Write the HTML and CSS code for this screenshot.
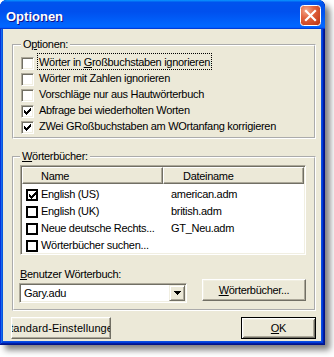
FILE: index.html
```html
<!DOCTYPE html>
<html lang="de">
<head>
<meta charset="utf-8">
<title>Optionen</title>
<link rel="stylesheet" href="styles.css">
</head>
<body>
<div class="window">
  <div class="titlebar">
    <span class="title">Optionen</span>
    <span class="close" aria-label="Schließen">
      <svg width="21" height="21" viewBox="0 0 21 21">
        <defs>
          <radialGradient id="cg" cx="30%" cy="25%" r="95%">
            <stop offset="0" stop-color="#F4A88C"/>
            <stop offset="0.4" stop-color="#E2643F"/>
            <stop offset="1" stop-color="#BF3512"/>
          </radialGradient>
        </defs>
        <rect x="0.5" y="0.5" width="20" height="20" rx="3" fill="url(#cg)" stroke="#fff"/>
        <path d="M6 6 L15 15 M15 6 L6 15" stroke="#fff" stroke-width="2.2" stroke-linecap="square"/>
      </svg>
    </span>
  </div>
  <div class="body">
    <fieldset class="group g1">
      <legend>O<u>p</u>tionen:</legend>
      <div class="opt"><span class="cb"></span><span class="lbl focus">Wörter in <u>G</u>roßbuchstaben ignorieren</span></div>
      <div class="opt"><span class="cb"></span><span class="lbl">Wörter mit Zahlen ignorieren</span></div>
      <div class="opt"><span class="cb"></span><span class="lbl">Vorschläge nur aus Hautwörterbuch</span></div>
      <div class="opt"><span class="cb"><svg class="chk" width="11" height="11" viewBox="-2 -2 11 11"><path d="M6 0h1v1h-1zM5 1h2v1h-2zM0 2h1v1h-1zM4 2h3v1h-3zM0 3h2v1h-2zM3 3h3v1h-3zM0 4h5v1h-5zM1 5h3v1h-3zM2 6h1v1h-1z"/></svg></span><span class="lbl">Abfrage bei wiederholten Worten</span></div>
      <div class="opt"><span class="cb"><svg class="chk" width="11" height="11" viewBox="-2 -2 11 11"><path d="M6 0h1v1h-1zM5 1h2v1h-2zM0 2h1v1h-1zM4 2h3v1h-3zM0 3h2v1h-2zM3 3h3v1h-3zM0 4h5v1h-5zM1 5h3v1h-3zM2 6h1v1h-1z"/></svg></span><span class="lbl">ZWei GRoßbuchstaben am WOrtanfang korrigieren</span></div>
    </fieldset>

    <fieldset class="group g2">
      <legend><u>W</u>örterbücher:</legend>
      <div class="list">
        <div class="lhead">
          <div class="hcol h1">Name</div>
          <div class="hcol h2">Dateiname</div>
        </div>
        <div class="lrows">
          <div class="lrow"><div class="c1"><span class="lcb"><svg class="chk" width="8" height="8" viewBox="-0.5 -0.5 8 8"><path d="M6 0h1v1h-1zM5 1h2v1h-2zM0 2h1v1h-1zM4 2h3v1h-3zM0 3h2v1h-2zM3 3h3v1h-3zM0 4h5v1h-5zM1 5h3v1h-3zM2 6h1v1h-1z"/></svg></span>English (US)</div><div class="c2">american.adm</div></div>
          <div class="lrow"><div class="c1"><span class="lcb"></span>English (UK)</div><div class="c2">british.adm</div></div>
          <div class="lrow"><div class="c1"><span class="lcb"></span>Neue deutsche Rechts...</div><div class="c2">GT_Neu.adm</div></div>
          <div class="lrow"><div class="c1"><span class="lcb"></span>Wörterbücher suchen...</div><div class="c2"></div></div>
        </div>
      </div>
      <div class="userrow">
        <div class="usercol">
          <div class="ulabel"><u>B</u>enutzer Wörterbuch:</div>
          <div class="combo">
            <span class="ctext">Gary.adu</span>
            <span class="cbtn"><svg width="7" height="4" viewBox="0 0 7 4"><path d="M0 0h7v1h-1v1h-1v1h-1v1h-1v-1h-1v-1h-1v-1h-1z"/></svg></span>
          </div>
        </div>
        <button class="btn wb"><span><u>W</u>örterbücher...</span></button>
      </div>
    </fieldset>

    <div class="footer">
      <button class="btn std"><span class="nowrap">Standard-Einstellungen</span></button>
      <button class="btn ok"><span><u>O</u>K</span></button>
    </div>
  </div>
</div>
</body>
</html>
```

FILE: styles.css
```css
* { box-sizing: border-box; }

html, body {
  margin: 0;
  padding: 0;
  background: #fff;
}

body {
  width: 334px;
  height: 357px;
  overflow: hidden;
  font-family: "Liberation Sans", Arial, sans-serif;
  font-size: 11px;
  letter-spacing: -0.3px;
  color: #000;
}

u { text-decoration: underline; text-underline-offset: 1px; }

.window {
  width: 325px;
  height: 345px;
  display: flex;
  flex-direction: column;
  border-radius: 7px 7px 0 0;
  background: #0A4FE0;
  box-shadow:
    inset -1px -1px #00138c,
    inset 1px 1px #0831d9,
    inset -2px -2px #001ea0,
    inset 2px 2px #166aee,
    inset -3px -3px #003bda,
    inset 3px 3px #0855dd,
    5px 5px 6px rgba(0, 0, 0, 0.5);
}

.titlebar {
  height: 29px;
  flex: none;
  display: flex;
  align-items: flex-start;
  padding: 0 4px 0 6px;
  border-radius: 7px 7px 0 0;
  background: linear-gradient(180deg, #0997ff, #0053ee 8%, #0050ee 40%, #0066ff 88%, #0066ff 93%, #005bff 95%, #003dd7 96%, #003dd7);
}

.title {
  margin-top: 9px;
  font-size: 13px;
  line-height: 16px;
  font-weight: bold;
  letter-spacing: 0;
  color: #fff;
  text-shadow: 1px 1px #0f1089;
}

.close {
  margin-left: auto;
  margin-top: 5px;
  width: 21px;
  height: 21px;
  display: block;
}
.close svg { display: block; }

.body {
  flex: 1;
  margin: 0 4px 4px 3px;
  background: #ECE9D8;
  display: flex;
  flex-direction: column;
}

.group {
  min-width: 0;
  border: 2px groove #fff;
  margin: 0 5px 0 9px;
}

.group legend {
  padding: 0 2px;
  line-height: 13px;
}

.g1 {
  margin-top: 9px;
  padding: 4px 8px 2px 7px;
}

.g2 {
  margin-top: 11px;
  padding: 2px 8px 6px 6px;
}

.opt {
  height: 16px;
  display: flex;
  align-items: flex-start;
}

.cb {
  flex: none;
  width: 13px;
  height: 13px;
  margin-top: 2px;
  margin-right: 3px;
  border: 1px solid;
  border-color: #ACA899 #fff #fff #ACA899;
  box-shadow: inset 1px 1px #716F64, inset -1px -1px #F1EFE2;
  background: #fff;
}

.chk { display: block; shape-rendering: crispEdges; }
.chk path { fill: #000; }

.lbl {
  display: inline-block;
  margin-top: -2px;
  padding: 1px 1px 0 1px;
  line-height: 14px;
  border: 1px solid transparent;
  white-space: nowrap;
}

.lbl.focus { border: 1px dotted #000; }

.list {
  height: 90px;
  overflow: hidden;
  padding: 1px;
  border: 1px solid;
  border-color: #ACA899 #fff #fff #ACA899;
  box-shadow: inset 1px 1px #716F64, inset -1px -1px #F1EFE2;
  background: #fff;
}

.lhead {
  display: flex;
  height: 17px;
}

.hcol {
  height: 17px;
  padding: 2px 0 0 18px;
  line-height: 13px;
  background: #ECE9D8;
  border: 1px solid;
  border-color: #fff #716F64 #716F64 #fff;
  box-shadow: inset -1px -1px #ACA899;
  white-space: nowrap;
}

.h1 { width: 141px; flex: none; }
.h2 { flex: 1; padding-left: 19px; }

.lrows { padding-top: 2px; }

.lrow {
  height: 17px;
  display: flex;
  align-items: center;
  line-height: 17px;
  white-space: nowrap;
}

.c1 {
  width: 141px;
  flex: none;
  display: flex;
  align-items: center;
  padding-left: 4px;
}

.c2 { padding-left: 8px; }

.lcb {
  flex: none;
  width: 12px;
  height: 12px;
  margin-right: 3px;
  border: 2px solid #000;
  background: #fff;
}

.userrow {
  margin-top: 13px;
  display: flex;
  justify-content: space-between;
  align-items: flex-end;
}

.ulabel {
  line-height: 13px;
}

.combo {
  margin-top: 2px;
  margin-left: -1px;
  width: 168px;
  height: 20px;
  display: flex;
  padding: 1px;
  border: 1px solid;
  border-color: #ACA899 #fff #fff #ACA899;
  box-shadow: inset 1px 1px #716F64, inset -1px -1px #F1EFE2;
  background: #fff;
}

.ctext {
  flex: 1;
  padding-left: 3px;
  line-height: 16px;
}

.cbtn {
  width: 16px;
  height: 16px;
  display: flex;
  align-items: center;
  justify-content: center;
  background: #ECE9D8;
  border: 1px solid;
  border-color: #F1EFE2 #716F64 #716F64 #F1EFE2;
  box-shadow: inset 1px 1px #fff, inset -1px -1px #ACA899;
}
.cbtn svg { display: block; shape-rendering: crispEdges; }

.btn {
  font: inherit;
  letter-spacing: inherit;
  color: #000;
  background: #ECE9D8;
  padding: 0;
  margin: 0;
  display: flex;
  align-items: center;
  justify-content: center;
  overflow: hidden;
  line-height: 13px;
  border: 1px solid;
  border-color: #fff #716F64 #716F64 #fff;
  box-shadow: inset -1px -1px #ACA899, inset 1px 1px #F1EFE2;
}

.btn span { white-space: nowrap; flex: none; }

.wb {
  width: 104px;
  height: 22px;
  margin-bottom: 2px;
}

.footer {
  margin: 6px 5px 0 8px;
  display: flex;
  justify-content: space-between;
}

.std {
  width: 100px;
  height: 22px;
  letter-spacing: 0.1px;
}

.ok {
  width: 75px;
  height: 22px;
  border: 1px solid #000;
  box-shadow:
    inset 1px 1px #fff,
    inset -1px -1px #716F64,
    inset 2px 2px #F1EFE2,
    inset -2px -2px #ACA899;
}
```
